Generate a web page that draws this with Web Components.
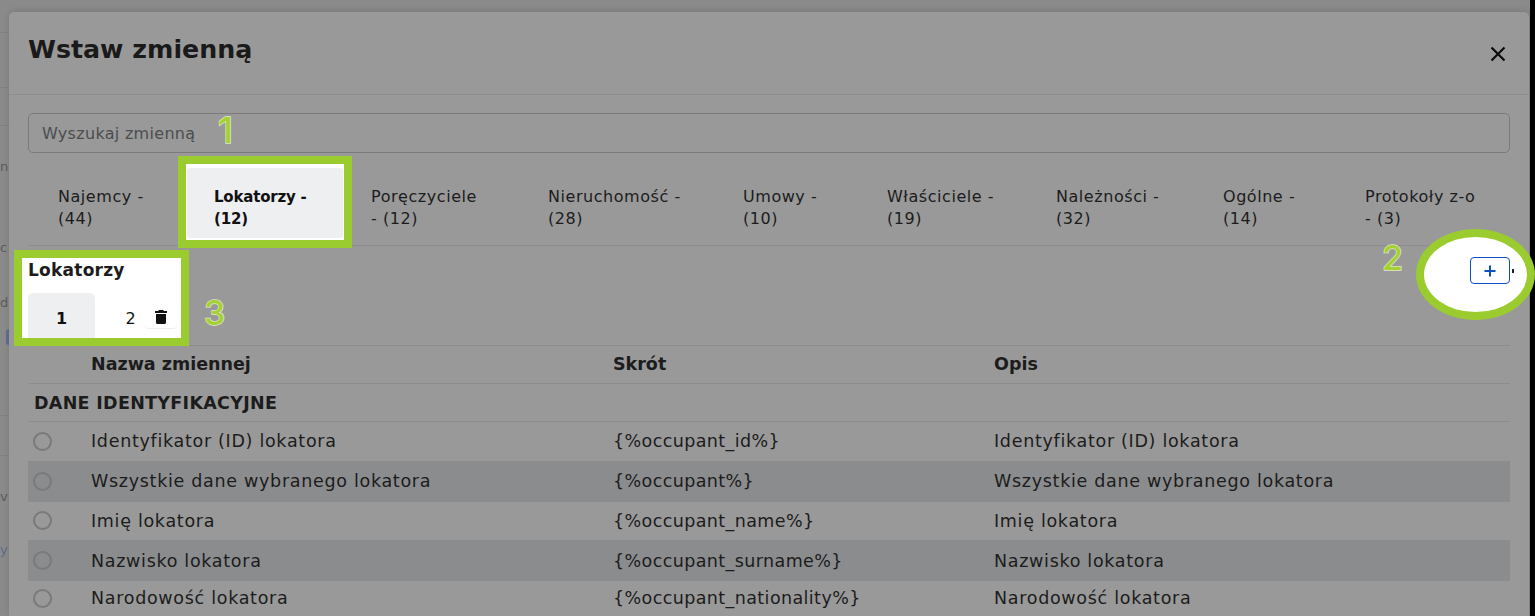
<!DOCTYPE html>
<html lang="pl">
<head>
<meta charset="utf-8">
<title>Wstaw zmienną</title>
<style>
  html, body { margin: 0; height: 100%; overflow: hidden; }
  body { box-sizing: border-box; border-right: 5px solid #000; background: #8a8a8a; font-family: "DejaVu Sans", sans-serif; color: #1c1c1c; }
</style>
</head>
<body>
<var-backdrop></var-backdrop>
<var-modal heading="Wstaw zmienną">
  <var-search placeholder="Wyszukaj zmienną"></var-search>
  <var-tabs>
    <var-tab>Najemcy -<br>(44)</var-tab>
    <var-tab active>Lokatorzy -<br>(12)</var-tab>
    <var-tab>Poręczyciele<br>- (12)</var-tab>
    <var-tab>Nieruchomość -<br>(28)</var-tab>
    <var-tab>Umowy -<br>(10)</var-tab>
    <var-tab>Właściciele -<br>(19)</var-tab>
    <var-tab>Należności -<br>(32)</var-tab>
    <var-tab>Ogólne -<br>(14)</var-tab>
    <var-tab>Protokoły z-o<br>- (3)</var-tab>
  </var-tabs>
  <var-section heading="Lokatorzy"></var-section>
  <var-table></var-table>
</var-modal>

<script>
class VarBackdrop extends HTMLElement {
  constructor() {
    super();
    this.attachShadow({mode: 'open'});
  }

  connectedCallback() {
    this.shadowRoot.innerHTML = `
      <style>
        :host {
          display: block;
          width: 9px;
          font-size: 13px;
          line-height: 14px;
          color: #5b5b5b;
          white-space: nowrap;
        }
        .line { height: 1px; background: #7f7f7f; }
        .chip { width: 3px; height: 16px; margin-left: 6px; background: #5f6d94; border-radius: 3px 0 0 3px; }
        .txt { height: 14px; }
        .blue { color: #5c6a8e; }
      </style>
      <div class="line" style="margin-top: 32px"></div>
      <div class="line" style="margin-top: 54px"></div>
      <div class="line" style="margin-top: 37px"></div>
      <div class="txt" style="margin-top: 34px">n</div>
      <div class="txt" style="margin-top: 67px">c</div>
      <div class="txt" style="margin-top: 41px">d</div>
      <div class="chip" style="margin-top: 19px"></div>
      <div class="line" style="margin-top: 70px"></div>
      <div class="line" style="margin-top: 39px"></div>
      <div class="txt" style="margin-top: 34px">v</div>
      <div class="txt blue" style="margin-top: 39px">y</div>
    `;
  }
}

class VarModal extends HTMLElement {
  constructor() {
    super();
    this.attachShadow({mode: 'open'});
  }

  connectedCallback() {
    this.shadowRoot.innerHTML = `
      <style>
        :host {
          display: block;
          position: absolute;
          left: 9px;
          right: 6px;
          top: 12px;
          bottom: 0;
          background: #999;
          border-radius: 5px 5px 0 0;
          box-shadow: 0 -1px 6px rgba(0, 0, 0, 0.12);
        }
        header {
          height: 82px;
          display: flex;
          align-items: center;
          justify-content: space-between;
          padding: 0 19px;
          border-bottom: 1px solid #8d8d8d;
          margin-bottom: 18px;
        }
        h1 {
          margin: -8px 0 0;
          font-size: 25.300px;
          font-weight: 700;
          color: #1a1a1a;
        }
        svg { display: block; margin: 1px 4px 0 0; }
        .body { padding: 0 19px; }
      </style>
      <header>
        <h1>${this.getAttribute('heading')}</h1>
        <svg width="16" height="16" viewBox="0 0 16 16"><path d="M1.500 1.500l13 13M14.500 1.500l-13 13" stroke="#0a0a0a" stroke-width="2.200"/></svg>
      </header>
      <div class="body"><slot></slot></div>
    `;
  }
}

class VarSearch extends HTMLElement {
  constructor() {
    super();
    this.attachShadow({mode: 'open'});
  }

  connectedCallback() {
    this.shadowRoot.innerHTML = `
      <style>
        :host { display: block; position: relative; }
        .box {
          height: 38px;
          border: 1px solid #7b7b7b;
          border-radius: 5px;
          padding: 0 13px;
          line-height: 40px;
          font-size: 16px;
          letter-spacing: 0.3px;
          color: #4b4d50;
        }
        .mark {
          position: absolute;
          left: 190px;
          top: -3px;
          font-family: Inter, sans-serif;
          font-size: 36px;
          line-height: 40px;
          font-weight: 500;
          color: #a4d233;
          -webkit-text-stroke: 1.500px #dfe8c8;
          paint-order: stroke fill;
        }
      </style>
      <div class="box">${this.getAttribute('placeholder')}</div>
      <span class="mark">1</span>
    `;
  }
}

class VarTabs extends HTMLElement {
  constructor() {
    super();
    this.attachShadow({mode: 'open'});
  }

  connectedCallback() {
    this.shadowRoot.innerHTML = `
      <style>
        :host {
          display: grid;
          grid-template-columns: 156px 157px 177px 195px 144px 169px 167px 142px 1fr;
          height: 92px;
          border-bottom: 1px solid #8d8d8d;
        }
      </style>
      <slot></slot>
    `;
  }
}

class VarTab extends HTMLElement {
  constructor() {
    super();
    this.attachShadow({mode: 'open'});
  }

  connectedCallback() {
    this.shadowRoot.innerHTML = `
      <style>
        :host {
          display: block;
          position: relative;
          box-sizing: border-box;
          padding: 33px 0 0 30px;
          font-size: 16px;
          letter-spacing: 0.55px;
          line-height: 22px;
          color: #1c1c1c;
          white-space: nowrap;
        }
        :host([active]) {
          font-size: 15px;
          letter-spacing: -0.2px;
          font-weight: 700;
          color: #111;
          z-index: 1;
        }
        .hl {
          position: absolute;
          left: -6px;
          right: -11px;
          top: 3px;
          bottom: -3px;
          border: 8px solid #9bcc2f;
          background: #fff;
        }
        .fill {
          position: absolute;
          inset: 4px 1px 2px 1px;
          background: #eeeff1;
          border-radius: 3px;
        }
        .label { position: relative; }
      </style>
      ${this.hasAttribute('active') ? '<div class="hl"><div class="fill"></div></div>' : ''}
      <div class="label"><slot></slot></div>
    `;
  }
}

class VarSection extends HTMLElement {
  constructor() {
    super();
    this.attachShadow({mode: 'open'});
  }

  connectedCallback() {
    this.shadowRoot.innerHTML = `
      <style>
        :host {
          display: flex;
          justify-content: space-between;
          position: relative;
          height: 100px;
          box-sizing: border-box;
          border-bottom: 1px solid #8d8d8d;
        }
        .left {
          box-sizing: border-box;
          width: 175px;
          height: 96px;
          margin: 4px 0 0 -14px;
          border: 8px solid #9bcc2f;
          background: #fff;
          padding: 0 0 0 6px;
        }
        h2 {
          margin: 0;
          font-size: 17px;
          letter-spacing: 0.25px;
          line-height: 24px;
          font-weight: 700;
          color: #1c1c1c;
        }
        .pages {
          display: flex;
          margin-top: 11px;
          font-size: 16px;
          color: #111;
        }
        .page {
          width: 67px;
          height: 45px;
          line-height: 51px;
          text-align: center;
          box-sizing: border-box;
        }
        .page.on {
          background: #eeeff1;
          border-radius: 5px 5px 0 0;
          font-weight: 700;
        }
        .page.two { width: 50px; padding-left: 21px; text-align: center; }
        .trash {
          align-self: flex-start;
          margin: 12px 0 0 0;
          width: 32px;
          height: 23px;
          background: #fff;
          border-radius: 4px;
          box-shadow: 0 1px 1px #eeeeee;
          display: flex;
          align-items: center;
          justify-content: center;
        }
        .num {
          position: absolute;
          font-family: Inter, sans-serif;
          left: 176px;
          top: 47px;
          font-size: 34px;
          line-height: 40px;
          font-weight: 500;
          color: #a4d233;
          -webkit-text-stroke: 1.500px #dfe8c8;
          paint-order: stroke fill;
        }
        .num.two { left: 1354px; top: -8px; }
        .ring {
          position: absolute;
          right: -25px;
          top: -17px;
          width: 119px;
          height: 91px;
          box-sizing: border-box;
          border: 8px solid #9bcc2f;
          border-radius: 50%;
          background: #fff;
        }
        .plus {
          position: absolute;
          right: 0;
          top: 11px;
          box-sizing: border-box;
          width: 40px;
          height: 27px;
          border: 1px solid #0d4fc4;
          border-radius: 4px;
          background: #fff;
          display: flex;
          align-items: center;
          justify-content: center;
        }
        .tick {
          position: absolute;
          right: -4px;
          top: 23px;
          width: 2px;
          height: 4px;
          background: #222;
        }
      </style>
      <div class="left">
        <h2>${this.getAttribute('heading')}</h2>
        <div class="pages">
          <div class="page on">1</div>
          <div class="page two">2</div>
          <div class="trash">
            <svg width="12" height="14" viewBox="0 0 12 14"><path d="M4 0h4l1 1h3v2H0V1h3zM1 4h10v8.500A1.500 1.500 0 0 1 9.500 14h-7A1.500 1.500 0 0 1 1 12.500z" fill="#111"/></svg>
          </div>
        </div>
      </div>
      <span class="num">3</span>
      <span class="num two">2</span>
      <div class="ring"></div>
      <div class="plus">
        <svg width="12" height="12" viewBox="0 0 12 12"><path d="M6 .5v11M.5 6h11" stroke="#0d4fc4" stroke-width="2"/></svg>
      </div>
      <div class="tick"></div>
    `;
  }
}

const ROWS = [
  ['Identyfikator (ID) lokatora', '{%occupant_id%}', 'Identyfikator (ID) lokatora'],
  ['Wszystkie dane wybranego lokatora', '{%occupant%}', 'Wszystkie dane wybranego lokatora'],
  ['Imię lokatora', '{%occupant_name%}', 'Imię lokatora'],
  ['Nazwisko lokatora', '{%occupant_surname%}', 'Nazwisko lokatora'],
  ['Narodowość lokatora', '{%occupant_nationality%}', 'Narodowość lokatora'],
];

class VarTable extends HTMLElement {
  constructor() {
    super();
    this.attachShadow({mode: 'open'});
  }

  connectedCallback() {
    const rows = ROWS.map((r) => `
      <div class="row">
        <span class="radio"></span>
        <span>${r[0]}</span>
        <span class="code">${r[1]}</span>
        <span>${r[2]}</span>
      </div>`).join('');

    this.shadowRoot.innerHTML = `
      <style>
        :host { display: block; font-size: 17.500px; letter-spacing: 0.7px; color: #1c1c1c; }
        .row {
          display: grid;
          grid-template-columns: 63px 522px 381px 1fr;
          align-items: center;
          height: 38.500px;
          white-space: nowrap;
        }
        .row:nth-child(even) { height: 41px; background: #8b8c8e; }
        .row:last-child { height: 34px; }
        .code { letter-spacing: 0.4px; }
        .head {
          display: grid;
          grid-template-columns: 63px 522px 381px 1fr;
          align-items: center;
          box-sizing: border-box;
          height: 38px;
          padding-bottom: 2px;
          font-weight: 700;
          letter-spacing: 0;
          border-bottom: 1px solid #8d8d8d;
        }
        .group {
          height: 38px;
          box-sizing: border-box;
          line-height: 38px;
          padding-left: 6px;
          font-weight: 700;
          letter-spacing: 0.3px;
          border-bottom: 1px solid #8d8d8d;
        }
        .radio {
          display: block;
          box-sizing: border-box;
          width: 19px;
          height: 19px;
          margin-left: 5px;
          border: 2px solid #7a7a7a;
          border-radius: 50%;
        }
      </style>
      <div class="head"><span></span><span>Nazwa zmiennej</span><span>Skrót</span><span>Opis</span></div>
      <div class="group">DANE IDENTYFIKACYJNE</div>
      <div class="rows">${rows}</div>
    `;
  }
}

customElements.define('var-backdrop', VarBackdrop);
customElements.define('var-modal', VarModal);
customElements.define('var-search', VarSearch);
customElements.define('var-tabs', VarTabs);
customElements.define('var-tab', VarTab);
customElements.define('var-section', VarSection);
customElements.define('var-table', VarTable);
</script>
</body>
</html>
